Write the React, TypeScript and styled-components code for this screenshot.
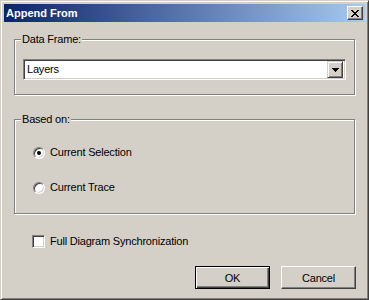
import React from 'react'
import styled, { createGlobalStyle } from 'styled-components'

const GlobalStyle = createGlobalStyle`
  html, body {
    margin: 0;
    padding: 0;
    background: #d4d0c8;
  }
  * {
    box-sizing: border-box;
  }
`

export default function App() {
  return (
    <>
      <GlobalStyle />
      <Window>
        <TitleBar>
          <TitleText>Append From</TitleText>
          <CloseButton aria-label="Close">
            <svg width="8" height="7" viewBox="0 0 8 7" shapeRendering="crispEdges">
              <path
                fill="#000"
                d="M0 0h2v1H0zM6 0h2v1H6zM1 1h2v1H1zM5 1h2v1H5zM2 2h4v1H2zM3 3h2v1H3zM2 4h4v1H2zM1 5h2v1H1zM5 5h2v1H5zM0 6h2v1H0zM6 6h2v1H6z"
              />
            </svg>
          </CloseButton>
        </TitleBar>
        <Body>
          <GroupBox height={56} padTop={19}>
            <GroupCaption>Data Frame:</GroupCaption>
            <Combo>
              <ComboValue>Layers</ComboValue>
              <ComboButton>
                <svg width="7" height="4" viewBox="0 0 7 4" shapeRendering="crispEdges">
                  <path fill="#000" d="M0 0h7v1H0zM1 1h5v1H1zM2 2h3v1H2zM3 3h1v1H3z" />
                </svg>
              </ComboButton>
            </Combo>
          </GroupBox>

          <GroupBox height={95} padTop={26} gapTop={24}>
            <GroupCaption>Based on:</GroupCaption>
            <OptionList>
              <OptionRow>
                <Radio checked />
                <OptionLabel>Current Selection</OptionLabel>
              </OptionRow>
              <OptionRow>
                <Radio />
                <OptionLabel>Current Trace</OptionLabel>
              </OptionRow>
            </OptionList>
          </GroupBox>

          <CheckRow>
            <CheckBox />
            <OptionLabel>Full Diagram Synchronization</OptionLabel>
          </CheckRow>

          <ButtonRow>
            <PushButton isDefault>OK</PushButton>
            <PushButton>Cancel</PushButton>
          </ButtonRow>
        </Body>
      </Window>
    </>
  )
}

const Window = styled.div`
  width: 369px;
  height: 300px;
  background: #d4d0c8;
  border: 1px solid;
  border-color: #d4d0c8 #404040 #404040 #d4d0c8;
  box-shadow: inset 1px 1px #fff, inset -1px -1px #808080;
  padding: 3px;
  display: flex;
  flex-direction: column;
  font-family: 'Liberation Sans', Arial, sans-serif;
  font-size: 11px;
  letter-spacing: -0.2px;
  color: #000;
`

const TitleBar = styled.div`
  height: 18px;
  display: flex;
  align-items: center;
  justify-content: space-between;
  padding: 0 2px 0 2px;
  background: linear-gradient(to right, #0a246a, #a6caf0);
`

const TitleText = styled.div`
  color: #fff;
  font-weight: bold;
  font-size: 11px;
  letter-spacing: 0;
  line-height: 14px;
`

const CloseButton = styled.div`
  width: 16px;
  height: 14px;
  background: #d4d0c8;
  border: 1px solid;
  border-color: #fff #404040 #404040 #fff;
  box-shadow: inset -1px -1px #808080;
  display: flex;
  align-items: center;
  justify-content: center;
  padding-right: 1px;
`

const Body = styled.div`
  flex: 1;
  display: flex;
  flex-direction: column;
  padding: 17px 10px 0 10px;
`

const GroupBox = styled.div<{ height: number; padTop: number; gapTop?: number }>`
  position: relative;
  height: ${(p) => p.height}px;
  margin-top: ${(p) => p.gapTop ?? 0}px;
  border: 1px solid #808080;
  box-shadow: inset 1px 1px #fff, 1px 1px #fff;
  padding: ${(p) => p.padTop}px 8px 0 8px;
`

const GroupCaption = styled.div`
  position: absolute;
  top: -7px;
  left: 6px;
  padding: 0 1px;
  background: #d4d0c8;
  line-height: 13px;
`

const Combo = styled.div`
  height: 21px;
  display: flex;
  align-items: center;
  background: #fff;
  border: 1px solid;
  border-color: #808080 #fff #fff #808080;
  box-shadow: inset 1px 1px #404040, inset -1px -1px #d4d0c8;
  padding: 2px 2px 2px 3px;
`

const ComboValue = styled.div`
  flex: 1;
  line-height: 15px;
`

const ComboButton = styled.div`
  width: 16px;
  height: 17px;
  background: #d4d0c8;
  border: 1px solid;
  border-color: #d4d0c8 #404040 #404040 #d4d0c8;
  box-shadow: inset 1px 1px #fff, inset -1px -1px #808080;
  display: flex;
  align-items: center;
  justify-content: center;
  padding-top: 1px;
`

const OptionList = styled.div`
  display: flex;
  flex-direction: column;
  gap: 22px;
  padding-left: 10px;
`

const OptionRow = styled.div`
  height: 13px;
  display: flex;
  align-items: center;
  gap: 5px;
`

const Radio = styled.span<{ checked?: boolean }>`
  position: relative;
  width: 12px;
  height: 12px;
  flex: none;
  border-radius: 50%;
  background: #fff;
  border: 1px solid;
  border-color: #808080 #fff #fff #808080;
  box-shadow: inset 1px 1px #404040, inset -1px -1px #d4d0c8;

  &::after {
    content: '';
    display: ${(p) => (p.checked ? 'block' : 'none')};
    position: absolute;
    left: 3px;
    top: 3px;
    width: 4px;
    height: 4px;
    border-radius: 50%;
    background: #000;
  }
`

const OptionLabel = styled.span`
  line-height: 13px;
  white-space: nowrap;
`

const CheckRow = styled.div`
  display: flex;
  align-items: center;
  gap: 5px;
  height: 13px;
  margin-top: 21px;
  margin-left: 18px;
`

const CheckBox = styled.span`
  width: 13px;
  height: 13px;
  flex: none;
  background: #fff;
  border: 1px solid;
  border-color: #808080 #fff #fff #808080;
  box-shadow: inset 1px 1px #404040, inset -1px -1px #d4d0c8;
`

const ButtonRow = styled.div`
  display: flex;
  justify-content: flex-end;
  gap: 11px;
  margin-top: 18px;
  margin-right: -1px;
`

const PushButton = styled.div<{ isDefault?: boolean }>`
  width: 75px;
  height: 23px;
  display: flex;
  align-items: center;
  justify-content: center;
  background: #d4d0c8;
  border: 1px solid;
  border-color: ${(p) => (p.isDefault ? '#000' : '#fff #404040 #404040 #fff')};
  box-shadow: ${(p) =>
    p.isDefault
      ? 'inset 1px 1px #fff, inset -1px -1px #404040, inset -2px -2px #808080'
      : 'inset -1px -1px #808080'};
  cursor: default;
`
